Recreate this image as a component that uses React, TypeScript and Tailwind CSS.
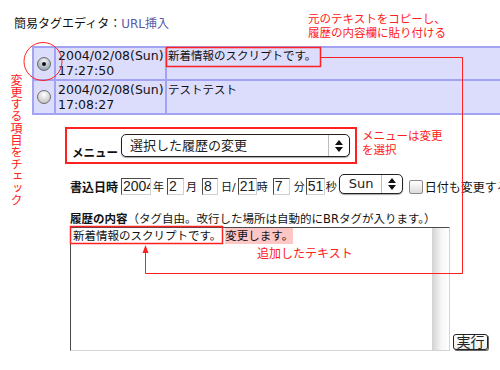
import type { FC, ReactNode } from "react";

const UpDown: FC = () => (
  <svg width="8" height="12" viewBox="0 0 8 12">
    <polygon points="0,5 4,0 8,5" fill="#111" />
    <polygon points="0,7 8,7 4,12" fill="#111" />
  </svg>
);

const Radio: FC<{ checked?: boolean }> = ({ checked }) => (
  <span
    className={
      "flex h-[14px] w-[14px] items-center justify-center rounded-full border border-[#6d6d6d] " +
      (checked
        ? "bg-[radial-gradient(circle_at_50%_30%,#f4f8fa,#9aa7b2_75%)]"
        : "bg-[radial-gradient(circle_at_50%_30%,#ffffff,#c4c4c4_80%)]")
    }
  >
    {checked && <span className="h-[4px] w-[4px] rounded-full bg-[#111]" />}
  </span>
);

const Field: FC<{ w: string; children: ReactNode }> = ({ w, children }) => (
  <span
    className={`${w} h-[17px] shrink-0 overflow-hidden whitespace-nowrap border border-t-[#4a4a4a] border-l-[#4a4a4a] border-b-[#d0d0d0] border-r-[#d0d0d0] bg-white pl-[1px] font-['Liberation_Sans',sans-serif] text-[14px] leading-[15px] text-[#222]`}
  >
    {children}
  </span>
);

const Unit: FC<{ className?: string; children: ReactNode }> = ({ className = "", children }) => (
  <span className={`shrink-0 whitespace-nowrap text-[11px] leading-[14px] ${className}`}>{children}</span>
);

export default function App() {
  return (
    <div className="relative h-[370px] w-[500px] overflow-hidden bg-white font-['DejaVu_Sans','Noto_Sans_CJK_JP',sans-serif] text-[#111]">
      {/* title */}
      <div className="pl-[14px] pt-[17px] text-[12px] leading-[15px]">
        簡易タグエディタ：<span className="text-[#5a5aa8]">URL挿入</span>
      </div>

      {/* history table */}
      <div className="ml-[32px] mt-[14px] grid w-[470px] grid-cols-[20px_109px_1fr] grid-rows-[31px_32px] gap-[2px] bg-[#a3a3f3] p-[2px]">
        <div className="flex items-center justify-center bg-[#dcdcfd]">
          <Radio checked />
        </div>
        <div className="bg-[#dcdcfd] pl-[2px] text-[12.5px] leading-[15px] whitespace-nowrap">
          2004/02/08(Sun)
          <br />
          17:27:50
        </div>
        <div className="bg-[#dcdcfd] pl-[1px] pt-[1px] text-[11.5px] leading-[15px] whitespace-nowrap">
          新着情報のスクリプトです。
        </div>
        <div className="flex items-center justify-center bg-[#dcdcfd]">
          <Radio />
        </div>
        <div className="bg-[#dcdcfd] pl-[2px] pt-[1px] text-[12.5px] leading-[15px] whitespace-nowrap">
          2004/02/08(Sun)
          <br />
          17:08:27
        </div>
        <div className="bg-[#dcdcfd] pl-[1px] pt-[2px] text-[11.5px] leading-[15px] whitespace-nowrap">
          テストテスト
        </div>
      </div>

      {/* menu */}
      <div className="ml-[72px] mt-[19px] flex items-end">
        <span className="mb-[-3px] text-[11.5px] font-bold leading-[14px]">メニュー</span>
        <div className="ml-[3px] flex h-[23px] w-[229px] rounded-[5px] border border-[#222] bg-white shadow-[0_1px_1px_rgba(0,0,0,0.35)]">
          <span className="flex-1 pl-[8px] text-[13px] leading-[21px] text-[#222]">選択した履歴の変更</span>
          <span className="flex w-[21px] items-center justify-center border-l border-[#bdbdbd]">
            <UpDown />
          </span>
        </div>
      </div>

      {/* date */}
      <div className="ml-[70px] mt-[17px] flex w-max items-end">
        <span className="shrink-0 text-[12px] font-bold leading-[14px]">書込日時</span>
        <span className="ml-[3px]" />
        <Field w="w-[30px]">2004</Field>
        <Unit className="ml-[2px]">年</Unit>
        <span className="ml-[3px]" />
        <Field w="w-[17px]">2</Field>
        <Unit className="ml-[2px]">月</Unit>
        <span className="ml-[5px]" />
        <Field w="w-[16px]">8</Field>
        <Unit className="ml-[3px]">日/</Unit>
        <span className="ml-[2px]" />
        <Field w="w-[19px]">21</Field>
        <Unit>時</Unit>
        <span className="ml-[5px]" />
        <Field w="w-[17px]">7</Field>
        <Unit className="ml-[4px]">分</Unit>
        <span className="ml-[1px]" />
        <Field w="w-[19px]">51</Field>
        <Unit className="ml-[1px]">秒</Unit>
        <div className="mb-[1px] ml-[2px] flex h-[20px] w-[64px] shrink-0 rounded-[5px] border border-[#222] bg-white shadow-[0_1px_1px_rgba(0,0,0,0.35)]">
          <span className="flex-1 pl-[9px] text-[13px] leading-[18px] text-[#222]">Sun</span>
          <span className="flex w-[21px] items-center justify-center border-l border-[#bdbdbd]">
            <UpDown />
          </span>
        </div>
        <span className="mb-[1px] ml-[6px] h-[14px] w-[14px] shrink-0 rounded-[2px] border border-[#8a8a8a] bg-[linear-gradient(to_bottom,#ffffff,#dcdcdc)]" />
        <span className="ml-[2px] shrink-0 whitespace-nowrap text-[12px] leading-[14px]">日付も変更する</span>
      </div>

      {/* content */}
      <div className="ml-[70px] mt-[17px] whitespace-nowrap text-[11.5px] leading-[15px]">
        <span className="font-bold">履歴の内容</span>（タグ自由。改行した場所は自動的にBRタグが入ります。）
      </div>
      <div className="ml-[70px] flex items-end">
        <div className="flex h-[124px] w-[380px] border-[1.5px] border-b-[#d4d4d4] border-l-[#4a4a4a] border-r-[#d4d4d4] border-t-[#4a4a4a] bg-white">
          <div className="flex-1 pl-[2px] text-[11.5px] leading-[16px] whitespace-nowrap">
            新着情報のスクリプトです。
            <span className="ml-[4px] inline-block bg-[#ffc6c6] leading-[16px]">変更します。</span>
          </div>
          <div className="w-[17px] bg-[linear-gradient(to_right,#d2d2d2,#f6f6f6_55%,#ffffff)]" />
        </div>
        <button className="mb-[1px] ml-[3px] h-[16px] w-[35px] rounded-[3px] border border-[#222] bg-[linear-gradient(to_bottom,#ffffff,#ececec)] text-[14px] leading-[13px] text-[#222] shadow-[1px_1px_0_#666]">
          実行
        </button>
      </div>

      {/* annotations */}
      <div className="absolute left-[308px] top-[12px] text-[11.5px] leading-[14px] text-[#ff2020]">
        元のテキストをコピーし、
        <br />
        履歴の内容欄に貼り付ける
      </div>
      <div className="absolute left-[9px] top-[74px] text-[12px] leading-[12px] text-[#ff2020] [writing-mode:vertical-rl]">
        変更する項目をチェック
      </div>
      <div className="absolute left-[362px] top-[129px] text-[11.5px] leading-[14px] text-[#ff2020]">
        メニューは変更
        <br />
        を選択
      </div>
      <div className="absolute left-[257px] top-[247px] text-[12px] leading-[15px] text-[#ff2020]">追加したテキスト</div>

      <svg className="pointer-events-none absolute left-0 top-0" width="500" height="370" viewBox="0 0 500 370">
        <circle cx="43" cy="61.5" r="19" fill="none" stroke="#ff2020" strokeWidth="1" />
        <rect x="166.5" y="47.5" width="154" height="19" fill="none" stroke="#ff2020" strokeWidth="1.5" />
        <rect x="66" y="128" width="290" height="35" fill="none" stroke="#ff2020" strokeWidth="2" />
        <rect x="70.5" y="226.5" width="152" height="17" fill="none" stroke="#ff2020" strokeWidth="1.5" />
        <path d="M321 57.5 H462.5 V273.5 H145.5 V251" fill="none" stroke="#ff2020" strokeWidth="1" />
        <polygon points="145.5,245 142.5,253 148.5,253" fill="#ff2020" />
      </svg>
    </div>
  );
}
